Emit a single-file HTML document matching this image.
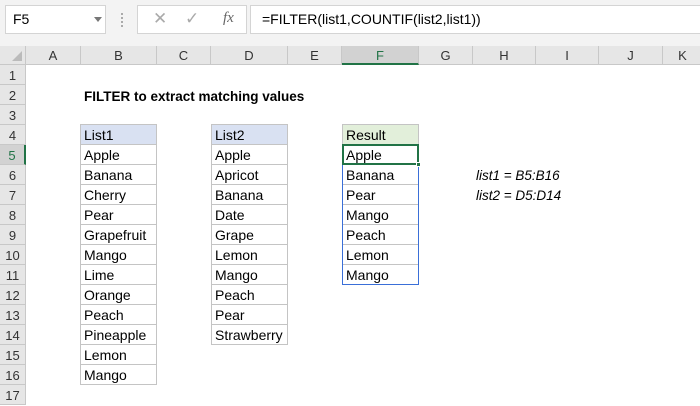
<!DOCTYPE html>
<html><head><style>
*{margin:0;padding:0;box-sizing:border-box}
body{width:700px;height:400px;overflow:hidden;background:#fff;font-family:"Liberation Sans",Arial,sans-serif;position:relative}
.a{position:absolute}
.top{left:0;top:0;width:700px;height:46px;background:#f3f3f3}
.box{background:#fff;border:1px solid #d4d4d4}
.colh{top:46px;height:19px;background:#e6e6e6;border-bottom:1px solid #c8c8c8;border-right:1px solid #c8c8c8;font-size:13px;color:#333;text-align:center;line-height:19px}
.rowh{left:0;width:26px;height:20px;background:#e6e6e6;border-bottom:1px solid #c8c8c8;border-right:1px solid #c8c8c8;font-size:13px;color:#333;text-align:center;line-height:21px}
table{position:absolute;border-collapse:collapse;font-size:14px;color:#000}
td{height:20px;border:1px solid #c4c4c4;padding:1px 0 0 3px;line-height:18px;white-space:nowrap}
</style></head><body>
<div class="a top"></div>
<div class="a box" style="left:5px;top:5px;width:101px;height:29px;font-size:14px;line-height:27px;padding-left:7px">F5<span style="position:absolute;left:88px;top:11px;border-left:4px solid transparent;border-right:4px solid transparent;border-top:5px solid #777"></span></div>
<div class="a" style="left:121px;top:13px;width:2px;height:14px;border-left:2px dotted #aaa"></div>
<div class="a box" style="left:137px;top:5px;width:110px;height:29px;color:#aaa">
<span class="a" style="left:15px;top:3px;font-size:17px">✕</span>
<span class="a" style="left:47px;top:3px;font-size:17px">✓</span>
<span class="a" style="left:85px;top:4px;font-size:15px;font-style:italic;font-family:'Liberation Serif',serif;color:#666">fx</span></div>
<div class="a box" style="left:250px;top:5px;width:460px;height:29px;font-size:14px;line-height:27px;padding-left:11px">=FILTER(list1,COUNTIF(list2,list1))</div>
<div class="a" style="left:0;top:46px;width:26px;height:19px;background:#e6e6e6;border-right:1px solid #c8c8c8;border-bottom:1px solid #c8c8c8"><span class="a" style="right:3px;bottom:3px;border-left:10px solid transparent;border-bottom:10px solid #bbb"></span></div>
<div class="a colh" style="left:26px;width:55px">A</div>
<div class="a colh" style="left:81px;width:76px">B</div>
<div class="a colh" style="left:157px;width:54px">C</div>
<div class="a colh" style="left:211px;width:77px">D</div>
<div class="a colh" style="left:288px;width:54px">E</div>
<div class="a colh" style="left:342px;width:77px;background:#d2d2d2;color:#217346;border-bottom:2px solid #217346">F</div>
<div class="a colh" style="left:419px;width:54px">G</div>
<div class="a colh" style="left:473px;width:63px">H</div>
<div class="a colh" style="left:536px;width:63px">I</div>
<div class="a colh" style="left:599px;width:64px">J</div>
<div class="a colh" style="left:663px;width:40px">K</div>
<div class="a rowh" style="top:65px">1</div>
<div class="a rowh" style="top:85px">2</div>
<div class="a rowh" style="top:105px">3</div>
<div class="a rowh" style="top:125px">4</div>
<div class="a rowh" style="top:145px;background:#d2d2d2;color:#217346;border-right:2px solid #217346">5</div>
<div class="a rowh" style="top:165px">6</div>
<div class="a rowh" style="top:185px">7</div>
<div class="a rowh" style="top:205px">8</div>
<div class="a rowh" style="top:225px">9</div>
<div class="a rowh" style="top:245px">10</div>
<div class="a rowh" style="top:265px">11</div>
<div class="a rowh" style="top:285px">12</div>
<div class="a rowh" style="top:305px">13</div>
<div class="a rowh" style="top:325px">14</div>
<div class="a rowh" style="top:345px">15</div>
<div class="a rowh" style="top:365px">16</div>
<div class="a rowh" style="top:385px">17</div>
<div class="a" style="left:84px;top:87px;font-size:13.5px;font-weight:bold;line-height:20px">FILTER to extract matching values</div>
<table style="left:80px;top:124px;width:77px">
<tr><td style="background:#d9e1f2">List1</td></tr><tr><td>Apple</td></tr><tr><td>Banana</td></tr><tr><td>Cherry</td></tr><tr><td>Pear</td></tr><tr><td>Grapefruit</td></tr><tr><td>Mango</td></tr><tr><td>Lime</td></tr><tr><td>Orange</td></tr><tr><td>Peach</td></tr><tr><td>Pineapple</td></tr><tr><td>Lemon</td></tr><tr><td>Mango</td></tr></table>
<table style="left:211px;top:124px;width:77px">
<tr><td style="background:#d9e1f2">List2</td></tr><tr><td>Apple</td></tr><tr><td>Apricot</td></tr><tr><td>Banana</td></tr><tr><td>Date</td></tr><tr><td>Grape</td></tr><tr><td>Lemon</td></tr><tr><td>Mango</td></tr><tr><td>Peach</td></tr><tr><td>Pear</td></tr><tr><td>Strawberry</td></tr></table>
<table style="left:342px;top:124px;width:77px">
<tr><td style="background:#e2efda">Result</td></tr><tr><td>Apple</td></tr><tr><td>Banana</td></tr><tr><td>Pear</td></tr><tr><td>Mango</td></tr><tr><td>Peach</td></tr><tr><td>Lemon</td></tr><tr><td>Mango</td></tr></table>
<div class="a" style="left:342px;top:164px;width:77px;height:121px;border:1px solid #3a6fd8;border-top:none"></div>
<div class="a" style="left:342px;top:144px;width:77px;height:21px;border:2px solid #217346"></div>
<div class="a" style="left:416px;top:162px;width:5px;height:5px;background:#217346;border:1px solid #fff"></div>
<div class="a" style="left:476px;top:166px;font-size:13.5px;font-style:italic;line-height:20px">list1 = B5:B16</div>
<div class="a" style="left:476px;top:186px;font-size:13.5px;font-style:italic;line-height:20px">list2 = D5:D14</div>
</body></html>
